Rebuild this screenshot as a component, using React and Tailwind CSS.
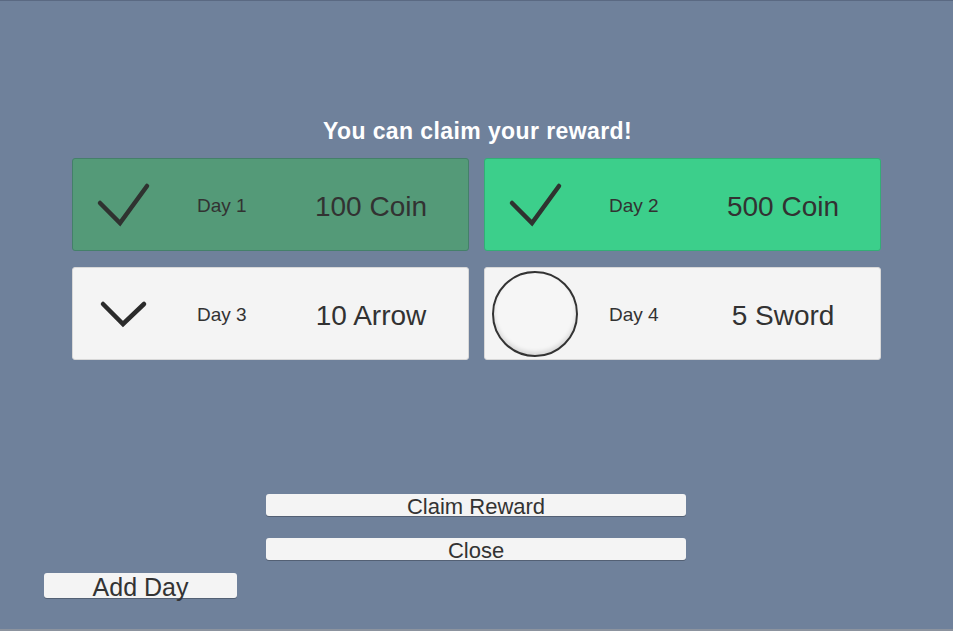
import React from 'react';

const days = [
  { day: 'Day 1', reward: '100 Coin', state: 'claimed' },
  { day: 'Day 2', reward: '500 Coin', state: 'ready' },
  { day: 'Day 3', reward: '10 Arrow', state: 'locked' },
  { day: 'Day 4', reward: '5 Sword', state: 'future' },
];

const cardStyles = {
  claimed: 'bg-[#549a78] border-[#44806a]',
  ready: 'bg-[#3ccf8b] border-[#33ad76]',
  locked: 'bg-[#f4f4f4] border-[#d8d8d8]',
  future: 'bg-[#f4f4f4] border-[#d8d8d8]',
};

const CheckIcon = () => (
  <svg width="56" height="48" viewBox="0 0 56 48">
    <path d="M5 22 L25 42 L52 5" fill="none" stroke="#2f3230" strokeWidth="4.5" strokeLinecap="round" strokeLinejoin="miter" />
  </svg>
);

const ChevronIcon = () => (
  <svg width="50" height="30" viewBox="0 0 50 30">
    <path d="M5 5 L25 25 L46 5" fill="none" stroke="#2b2b2b" strokeWidth="4.5" strokeLinecap="round" />
  </svg>
);

const EmptyCircle = () => (
  <div className="w-[86px] h-[86px] rounded-full border-2 border-[#333] bg-[#f6f6f6] shadow-[inset_0_-3px_4px_rgba(0,0,0,0.12)]" />
);

const DayCard = ({ day, reward, state }) => (
  <div className={`flex items-center h-[93px] rounded-[3px] border ${cardStyles[state]}`}>
    <div className="w-[100px] flex items-center justify-center shrink-0">
      {state === 'claimed' || state === 'ready' ? <CheckIcon /> : null}
      {state === 'locked' ? <ChevronIcon /> : null}
      {state === 'future' ? <EmptyCircle /> : null}
    </div>
    <div className="w-[120px] pl-[24px] text-[19px] text-[#323232] pt-[4px]">{day}</div>
    <div className="w-[156px] text-center text-[28px] text-[#323232] pt-[4px]">{reward}</div>
  </div>
);

export default function App() {
  return (
    <div
      className="w-[953px] h-[631px] bg-[#6f819b] border-t border-b-2 border-t-[#5a6982] border-b-[#8c939e] overflow-hidden"
      style={{ fontFamily: '"Liberation Sans", Arial, sans-serif' }}
    >
      <h1 className="mt-[116px] text-center text-white font-bold text-[23px] leading-[28px] pl-[2px] tracking-[0.4px]">
        You can claim your reward!
      </h1>

      <div className="mt-[13px] ml-[72px] w-[809px] grid grid-cols-2 gap-x-[15px] gap-y-[16px]">
        {days.map((d) => (
          <DayCard key={d.day} {...d} />
        ))}
      </div>

      <div className="mt-[134px] ml-[266px] w-[420px] flex flex-col gap-[22px]">
        <button className="h-[22px] rounded-[3px] bg-[#f4f4f4] shadow-[0_1px_0_rgba(0,0,0,0.25)] text-[22px] leading-[22px] pt-[2px] text-[#333]">
          Claim Reward
        </button>
        <button className="h-[22px] rounded-[3px] bg-[#f4f4f4] shadow-[0_1px_0_rgba(0,0,0,0.25)] text-[22px] leading-[22px] pt-[2px] text-[#333]">
          Close
        </button>
      </div>

      <button className="mt-[13px] ml-[44px] w-[193px] h-[25px] rounded-[3px] bg-[#f4f4f4] shadow-[0_1px_0_rgba(0,0,0,0.25)] text-[25px] leading-[26px] pt-[1px] text-[#333]">
        Add Day
      </button>
    </div>
  );
}
